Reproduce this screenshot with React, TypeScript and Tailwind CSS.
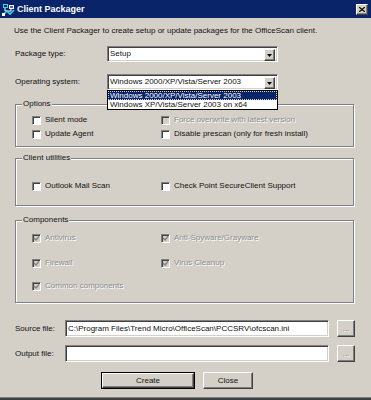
import React from "react";

const sunken =
  "border border-t-[#808080] border-l-[#808080] border-b-white border-r-white shadow-[inset_1px_1px_0_#404040,inset_-1px_-1px_0_#d4d0c8]";
const raised =
  "border border-t-white border-l-white border-b-[#404040] border-r-[#404040] shadow-[inset_-1px_-1px_0_#808080,inset_1px_1px_0_#d4d0c8]";
const disabledText = "text-[#8c8c8c] [text-shadow:1px_1px_0_#ffffff]";

function Check({
  label,
  checked = false,
  disabled = false,
}: {
  label: string;
  checked?: boolean;
  disabled?: boolean;
}) {
  return (
    <div className="flex items-center h-[10px] gap-[4px]">
      <div
        className={`w-[9px] h-[9px] border border-t-[#808080] border-l-[#808080] border-b-white border-r-white shadow-[inset_1px_1px_0_#404040] flex items-center justify-center ${
          disabled ? "bg-[#d4d0c8]" : "bg-white"
        }`}
      >
        {checked && (
          <svg width="7" height="7" viewBox="0 0 7 7">
            <path d="M1 3 L3 5 L6 1.5" stroke={disabled ? "#808080" : "#000"} strokeWidth="1.3" fill="none" />
          </svg>
        )}
      </div>
      <span className={`leading-[10px] whitespace-nowrap ${disabled ? disabledText : "text-[#111]"}`}>{label}</span>
    </div>
  );
}

function Group({
  label,
  className = "",
  children,
}: {
  label: string;
  className?: string;
  children?: React.ReactNode;
}) {
  return (
    <div
      className={`relative ml-[15px] w-[339px] border border-[#808080] shadow-[inset_1px_1px_0_#ffffff,1px_1px_0_#ffffff] ${className}`}
    >
      <span className="absolute left-[6px] top-[-6px] px-[1px] bg-[#d4d0c8] leading-[10px]">{label}</span>
      {children}
    </div>
  );
}

function Arrow() {
  return (
    <div className={`absolute right-[2px] top-[2px] w-[11px] h-[12px] bg-[#d4d0c8] flex items-center justify-center ${raised}`}>
      <svg width="5" height="3" viewBox="0 0 5 3">
        <path d="M0 0 H5 L2.5 3 Z" fill="#000" />
      </svg>
    </div>
  );
}

function Select({ value }: { value: string }) {
  return (
    <div className={`relative ml-auto mr-[93px] w-[171px] h-[16px] bg-white ${sunken} flex items-center pl-[2px]`}>
      <span className="leading-[10px] whitespace-nowrap">{value}</span>
      <Arrow />
    </div>
  );
}

export default function App() {
  return (
    <div className="w-[371px] h-[400px] bg-[#d4d0c8] font-['Liberation_Sans',Arial,sans-serif] text-[8px] text-[#111] relative overflow-hidden flex flex-col">
      {/* Title bar */}
      <div className="h-[18px] bg-[#0a246a] flex items-center pl-[2px]">
        <svg width="13" height="13" viewBox="0 0 13 13">
          <rect x="1" y="1" width="5" height="4" fill="#3ad0f0" />
          <rect x="2" y="2" width="3" height="2" fill="#0a246a" />
          <path d="M3 5 L3 8 M3 8 L9 8 M9 8 L9 5" stroke="#ffffff" strokeWidth="1" />
          <rect x="7" y="2" width="5" height="4" fill="#ffffff" />
          <rect x="8" y="3" width="3" height="2" fill="#4a6ad0" />
          <path d="M1 12 L5 8 L8 11 L12 7" stroke="#3ad0f0" strokeWidth="1.6" fill="none" />
          <rect x="0" y="10" width="3" height="3" fill="#ffffff" />
        </svg>
        <span className="ml-[2px] text-white font-bold text-[9px] leading-[10px]">Client Packager</span>
        <div className={`ml-auto mr-[3px] w-[12px] h-[11px] bg-[#d4d0c8] flex items-center justify-center ${raised}`}>
          <svg width="6" height="5" viewBox="0 0 6 5">
            <path d="M0 0 L6 5 M6 0 L0 5" stroke="#000" strokeWidth="1.2" />
          </svg>
        </div>
      </div>

      {/* Intro */}
      <div className="mt-[8px] pl-[14px] leading-[10px] whitespace-nowrap">
        Use the Client Packager to create setup or update packages for the OfficeScan client.
      </div>

      {/* Package type */}
      <div className="mt-[10px] h-[16px] flex items-center pl-[15px]">
        <span className="leading-[10px]">Package type:</span>
        <Select value="Setup" />
      </div>

      {/* Operating system */}
      <div className="mt-[12px] h-[16px] flex items-center pl-[15px]">
        <span className="leading-[10px]">Operating system:</span>
        <Select value="Windows 2000/XP/Vista/Server 2003" />
      </div>

      {/* Options */}
      <Group label="Options" className="mt-[14px] pt-[10px] pb-[7px]">
        <div className="grid grid-cols-[129px_1fr] gap-y-[4px] pl-[16px]">
          <Check label="Silent mode" />
          <Check label="Force overwrite with latest version" disabled />
          <Check label="Update Agent" />
          <Check label="Disable prescan (only for fresh install)" />
        </div>
      </Group>

      {/* Client utilities */}
      <Group label="Client utilities" className="mt-[11px] pt-[22px] pb-[14px]">
        <div className="grid grid-cols-[129px_1fr] pl-[16px]">
          <Check label="Outlook Mail Scan" />
          <Check label="Check Point SecureClient Support" />
        </div>
      </Group>

      {/* Components */}
      <Group label="Components" className="mt-[14px] pt-[12px] pb-[11px]">
        <div className="grid grid-cols-[129px_1fr] pl-[16px]">
          <Check label="Antivirus" checked disabled />
          <Check label="Anti-Spyware/Grayware" checked disabled />
          <div className="mt-[15px]">
            <Check label="Firewall" checked disabled />
          </div>
          <div className="mt-[15px]">
            <Check label="Virus Cleanup" checked disabled />
          </div>
          <div className="mt-[13px]">
            <Check label="Common components" checked disabled />
          </div>
        </div>
      </Group>

      {/* Source file */}
      <div className="mt-[17px] h-[17px] flex items-center pl-[15px]">
        <span className="w-[50px] leading-[10px]">Source file:</span>
        <div className={`w-[264px] h-[17px] bg-white ${sunken} flex items-center pl-[2px]`}>
          <span className="leading-[10px] whitespace-nowrap">
            C:\Program Files\Trend Micro\OfficeScan\PCCSRV\ofcscan.ini
          </span>
        </div>
        <div className={`ml-[8px] w-[18px] h-[17px] bg-[#d4d0c8] ${raised} flex items-center justify-center`}>
          <span className={`leading-[8px] ${disabledText}`}>...</span>
        </div>
      </div>

      {/* Output file */}
      <div className="mt-[8px] h-[17px] flex items-center pl-[15px]">
        <span className="w-[50px] leading-[10px]">Output file:</span>
        <div className={`w-[264px] h-[17px] bg-white ${sunken}`} />
        <div className={`ml-[8px] w-[18px] h-[17px] bg-[#d4d0c8] ${raised} flex items-center justify-center`}>
          <span className={`leading-[8px] ${disabledText}`}>...</span>
        </div>
      </div>

      {/* Buttons */}
      <div className="mt-[10px] h-[17px] flex items-center">
        <div className="ml-[101px] w-[94px] h-[17px] border border-black">
          <div className={`w-full h-full bg-[#d4d0c8] ${raised} flex items-center justify-center`}>
            <span className="leading-[10px]">Create</span>
          </div>
        </div>
        <div className={`ml-[8px] w-[50px] h-[17px] bg-[#d4d0c8] ${raised} flex items-center justify-center`}>
          <span className="leading-[10px]">Close</span>
        </div>
      </div>

      {/* bottom window edge */}
      <div className="mt-auto h-[3px] border-t border-[#808080] bg-[#404040]" />

      {/* Open dropdown list (overlay) */}
      <div className="absolute left-[107px] top-[90px] w-[171px] border border-black bg-white">
        <div className="h-[9px] leading-[9px] bg-[#0a246a] text-white pl-[2px] whitespace-nowrap outline outline-1 outline-dotted outline-offset-[-1px] outline-[#d4d0c8]">
          Windows 2000/XP/Vista/Server 2003
        </div>
        <div className="h-[9px] leading-[9px] pl-[2px] whitespace-nowrap">Windows XP/Vista/Server 2003 on x64</div>
      </div>
    </div>
  );
}
